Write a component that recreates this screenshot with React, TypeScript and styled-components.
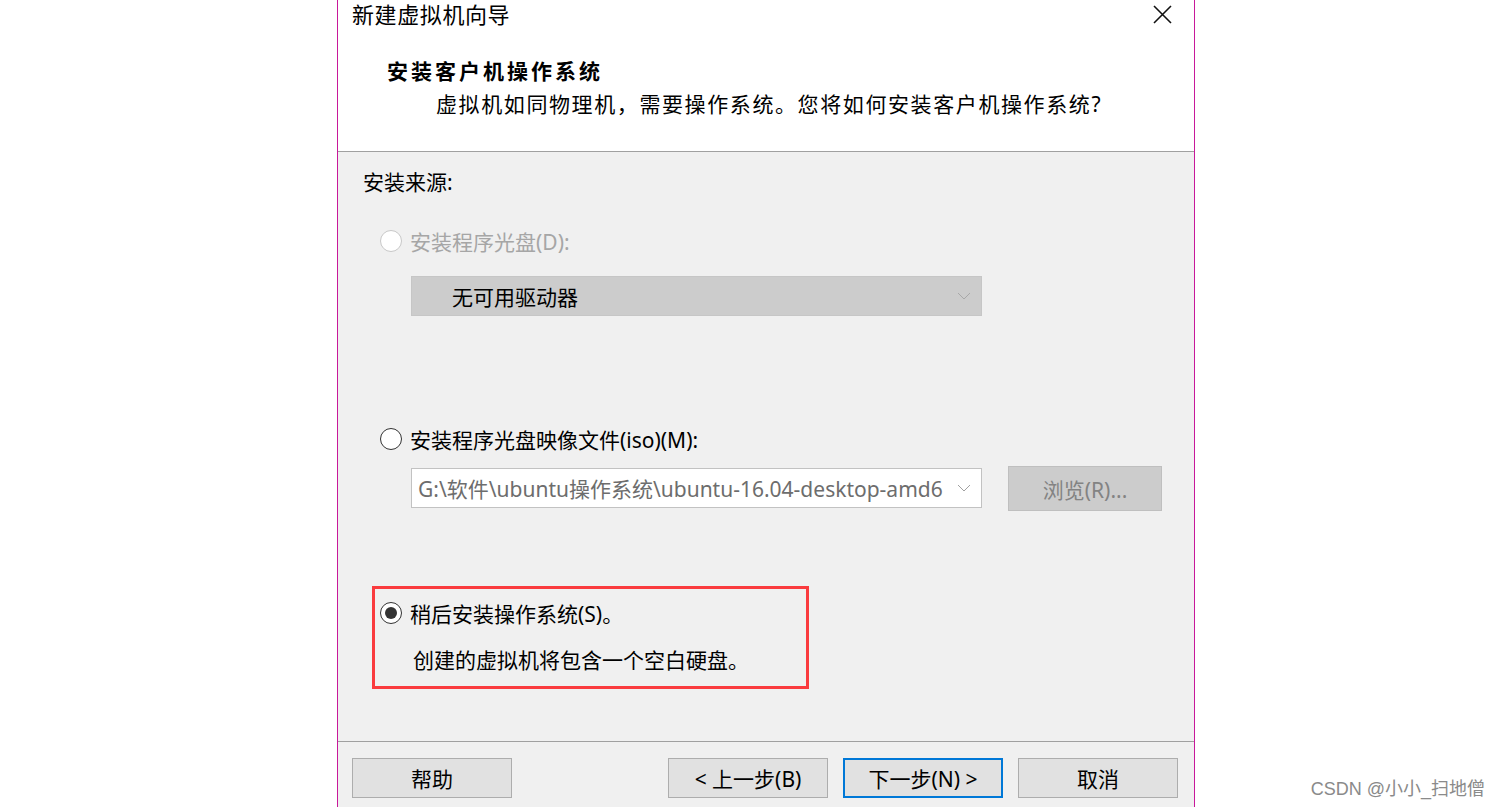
import React from 'react'
import styled, { createGlobalStyle } from 'styled-components'

const GlobalStyle = createGlobalStyle`
  html, body {
    margin: 0;
    padding: 0;
    background: #ffffff;
    overflow: hidden;
  }
  body {
    font-family: "Noto Sans", "Noto Sans CJK SC", sans-serif;
    color: #000;
  }
`

const Page = styled.div`
  position: relative;
  width: 1498px;
  height: 807px;
  display: flex;
`

const Dialog = styled.div`
  margin-left: 337px;
  width: 856px;
  height: 807px;
  border-left: 1px solid #c8189a;
  border-right: 1px solid #c8189a;
  display: flex;
  flex-direction: column;
  background: #f0f0f0;
  overflow: hidden;
`

const Header = styled.div`
  height: 151px;
  background: #ffffff;
  border-bottom: 1px solid #a0a0a0;
  display: flex;
  flex-direction: column;
`

const TitleBar = styled.div`
  height: 28px;
  display: flex;
  align-items: center;
  justify-content: space-between;
  padding: 0 22px 0 14px;
`

const WindowTitle = styled.div`
  font-size: 22px;
  letter-spacing: 0.6px;
  line-height: 28px;
  color: #000;
`

const CloseButton = styled.div`
  width: 20px;
  height: 20px;
  display: flex;
  align-items: center;
  justify-content: center;
`

const StepTitle = styled.div`
  margin: 28px 0 0 49px;
  font-size: 21px;
  font-weight: bold;
  letter-spacing: 3px;
  line-height: 30px;
`

const StepSubtitle = styled.div`
  margin: 3px 0 0 98px;
  font-size: 21px;
  letter-spacing: 1.6px;
  line-height: 30px;
`

const Body = styled.div`
  height: 589px;
  border-bottom: 1px solid #a0a0a0;
  display: flex;
  flex-direction: column;
  padding-left: 25px;
`

const SourceLabel = styled.div`
  margin-top: 15px;
  font-size: 21px;
  line-height: 30px;
`

const RadioRow = styled.div<{ $top: number; $left?: number; $disabled?: boolean }>`
  margin-top: ${({ $top }) => $top}px;
  margin-left: ${({ $left }) => $left ?? 17}px;
  display: flex;
  align-items: center;
  gap: 8px;
  height: 30px;
  font-size: 21px;
  color: ${({ $disabled }) => ($disabled ? '#a6a6a6' : '#000')};
`

const RadioCircle = styled.span<{ $checked?: boolean; $disabled?: boolean }>`
  box-sizing: border-box;
  width: 22px;
  height: 22px;
  border-radius: 50%;
  border: 1.5px solid ${({ $disabled }) => ($disabled ? '#c8c8c8' : '#333')};
  background: #fff;
  display: flex;
  align-items: center;
  justify-content: center;

  &::after {
    content: '';
    display: ${({ $checked }) => ($checked ? 'block' : 'none')};
    width: 12px;
    height: 12px;
    border-radius: 50%;
    background: #333;
  }
`

const FieldRow = styled.div<{ $top: number }>`
  margin-top: ${({ $top }) => $top}px;
  margin-left: 48px;
  display: flex;
  align-items: flex-start;
  gap: 26px;
`

const Combo = styled.div<{ $disabled?: boolean }>`
  box-sizing: border-box;
  width: 571px;
  height: 40px;
  border: 1px solid ${({ $disabled }) => ($disabled ? '#c6c6c6' : '#c2c2c2')};
  background: ${({ $disabled }) => ($disabled ? '#cccccc' : '#ffffff')};
  display: flex;
  align-items: center;
  font-size: 21px;
`

const ComboText = styled.span<{ $pad: number; $muted?: boolean }>`
  flex: 1;
  padding-left: ${({ $pad }) => $pad}px;
  white-space: nowrap;
  color: ${({ $muted }) => ($muted ? '#6d6d6d' : '#000')};
`

const Chevron = styled.span`
  width: 34px;
  display: flex;
  justify-content: center;
`

const BrowseButton = styled.div`
  box-sizing: border-box;
  width: 154px;
  height: 45px;
  border: 1px solid #bfbfbf;
  background: #cccccc;
  color: #838383;
  font-size: 21px;
  display: flex;
  align-items: center;
  justify-content: center;
  margin-top: -2px;
`

const Highlight = styled.div`
  box-sizing: border-box;
  margin-top: 75px;
  margin-left: 9px;
  width: 437px;
  height: 103px;
  border: 3px solid #fa3b3e;
  display: flex;
  flex-direction: column;
`

const Note = styled.div`
  margin: 17px 0 0 38px;
  font-size: 21px;
  line-height: 30px;
`

const Footer = styled.div`
  display: flex;
  align-items: center;
  justify-content: space-between;
  padding: 16px 16px 0 14px;
`

const ButtonGroup = styled.div`
  display: flex;
  gap: 15px;
`

const DialogButton = styled.div<{ $primary?: boolean }>`
  box-sizing: border-box;
  width: 160px;
  height: 40px;
  background: #e1e1e1;
  border: ${({ $primary }) => ($primary ? '2px solid #0078d7' : '1px solid #adadad')};
  font-size: 21px;
  display: flex;
  align-items: center;
  justify-content: center;
  color: #000;
`

const Watermark = styled.div`
  position: absolute;
  right: 13px;
  bottom: 7px;
  font-size: 18px;
  color: #8a8a8a;
  font-family: "Liberation Sans", "Noto Sans CJK SC", sans-serif;
`

const ChevronIcon = ({ color }: { color: string }) => (
  <svg width="14" height="8" viewBox="0 0 14 8">
    <path d="M1 1 L7 7 L13 1" fill="none" stroke={color} strokeWidth="1" />
  </svg>
)

const CloseIcon = () => (
  <svg width="19" height="19" viewBox="0 0 19 19">
    <path d="M1 1 L18 18 M18 1 L1 18" stroke="#111" strokeWidth="1.6" />
  </svg>
)

export default function App() {
  return (
    <Page>
      <GlobalStyle />
      <Dialog>
        <Header>
          <TitleBar>
            <WindowTitle>新建虚拟机向导</WindowTitle>
            <CloseButton>
              <CloseIcon />
            </CloseButton>
          </TitleBar>
          <StepTitle>安装客户机操作系统</StepTitle>
          <StepSubtitle>虚拟机如同物理机，需要操作系统。您将如何安装客户机操作系统?</StepSubtitle>
        </Header>

        <Body>
          <SourceLabel>安装来源:</SourceLabel>

          <RadioRow $top={29} $disabled>
            <RadioCircle $disabled />
            <span>安装程序光盘(D):</span>
          </RadioRow>
          <FieldRow $top={20}>
            <Combo $disabled>
              <ComboText $pad={40}>无可用驱动器</ComboText>
              <Chevron>
                <ChevronIcon color="#a8a8a8" />
              </Chevron>
            </Combo>
          </FieldRow>

          <RadioRow $top={108}>
            <RadioCircle />
            <span>安装程序光盘映像文件(iso)(M):</span>
          </RadioRow>
          <FieldRow $top={14}>
            <Combo>
              <ComboText $pad={6} $muted>
                G:\软件\ubuntu操作系统\ubuntu-16.04-desktop-amd6
              </ComboText>
              <Chevron>
                <ChevronIcon color="#a0a0a0" />
              </Chevron>
            </Combo>
            <BrowseButton>浏览(R)...</BrowseButton>
          </FieldRow>

          <Highlight>
            <RadioRow $top={9} $left={5}>
              <RadioCircle $checked />
              <span>稍后安装操作系统(S)。</span>
            </RadioRow>
            <Note>创建的虚拟机将包含一个空白硬盘。</Note>
          </Highlight>
        </Body>

        <Footer>
          <DialogButton>帮助</DialogButton>
          <ButtonGroup>
            <DialogButton>&lt; 上一步(B)</DialogButton>
            <DialogButton $primary>下一步(N) &gt;</DialogButton>
            <DialogButton>取消</DialogButton>
          </ButtonGroup>
        </Footer>
      </Dialog>
      <Watermark>CSDN @小小_扫地僧</Watermark>
    </Page>
  )
}
